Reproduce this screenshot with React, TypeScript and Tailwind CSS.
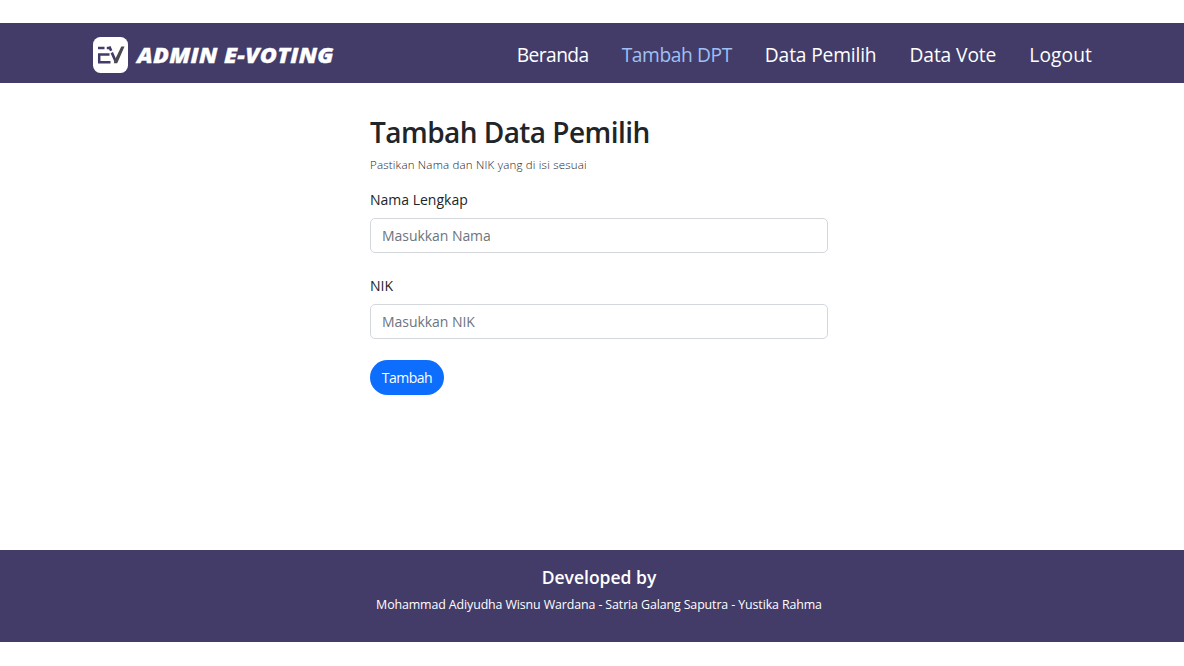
const navItems = [
  { label: "Beranda", style: "text-white tracking-[-0.55px]" },
  { label: "Tambah DPT", style: "text-[#9ec0f5] tracking-[-0.4px]" },
  { label: "Data Pemilih", style: "text-white tracking-[-0.15px]" },
  { label: "Data Vote", style: "text-white tracking-[-0.1px]" },
  { label: "Logout", style: "text-white tracking-[0.1px]" },
];

function Logo() {
  return (
    <svg className="h-9 w-[35px] shrink-0" viewBox="0 0 35 36" fill="none">
      <rect width="35" height="36" rx="7.5" fill="#fff" />
      <path d="M5 10.9h6.5M13.8 10.9h4M5 17.6h11.5M5 25.2h12.5M6.2 17.6v7.6" stroke="#433c68" strokeWidth="2.5" />
      <path d="M16.3 9.6l1.9 4.2M18.8 15.6l4 9" stroke="#433c68" strokeWidth="2.6" />
      <path d="M20.8 26.2h3.4L31.5 9.6h-3.2l-6.3 13z" fill="#4b4a50" />
    </svg>
  );
}

function Field({ label, hint }: { label: string; hint: string }) {
  return (
    <label className="block">
      <span className="block h-[22px] text-[14px] leading-[22px]">{label}</span>
      <input
        placeholder={hint}
        className="mt-[7px] block h-[35px] w-[458px] rounded-[5px] border border-[#d3d7dc] bg-white px-[11px] text-[14px] tracking-[-0.05px] placeholder:text-[#6c757d]"
      />
    </label>
  );
}

export default function App() {
  return (
    <div className="flex h-[666px] w-[1184px] flex-col bg-white pt-[23px] pb-6 font-['Open_Sans','Noto_Sans',sans-serif] text-[#212529]">
      <header className="flex h-[60px] shrink-0 items-center bg-[#433c68] pt-[6px] pr-[92px] pb-[2px] pl-[93px] text-white">
        <Logo />
        <span className="ml-[9px] origin-left scale-x-[1.11] text-[21px] leading-7 font-extrabold tracking-[0.2px] whitespace-nowrap italic [-webkit-text-stroke:0.3px_white]">
          ADMIN E-VOTING
        </span>
        <nav className="ml-auto flex gap-[33px] text-[19.2px] leading-7 whitespace-nowrap">
          {navItems.map((item) => (
            <a key={item.label} className={item.style}>{item.label}</a>
          ))}
        </nav>
      </header>

      <main className="flex flex-1 flex-col items-start pt-[31px] pl-[370px]">
        <h1 className="text-[28px] leading-9 font-semibold tracking-[-0.55px] whitespace-nowrap">Tambah Data Pemilih</h1>
        <p className="mt-[6px] text-[11.5px] leading-[18px] font-light tracking-[0.2px]">Pastikan Nama dan NIK yang di isi sesuai</p>
        <form className="mt-[15px] flex flex-col items-start">
          <Field label="Nama Lengkap" hint="Masukkan Nama" />
          <div className="mt-[22px]">
            <Field label="NIK" hint="Masukkan NIK" />
          </div>
          <button
            type="button"
            className="mt-[21px] h-[35px] w-[74px] rounded-full bg-[#0d6efd] text-[14px] tracking-[-0.5px] whitespace-nowrap text-white"
          >
            Tambah
          </button>
        </form>
      </main>

      <footer className="h-[92px] shrink-0 bg-[#433c68] pt-4 text-center text-white">
        <h2 className="pl-[14px] text-[17.5px] leading-[22px] font-semibold">Developed by</h2>
        <p className="mt-[8px] pl-[14px] text-[12.4px] leading-[18px] tracking-[-0.11px]">
          Mohammad Adiyudha Wisnu Wardana - Satria Galang Saputra - Yustika Rahma
        </p>
      </footer>
    </div>
  );
}
